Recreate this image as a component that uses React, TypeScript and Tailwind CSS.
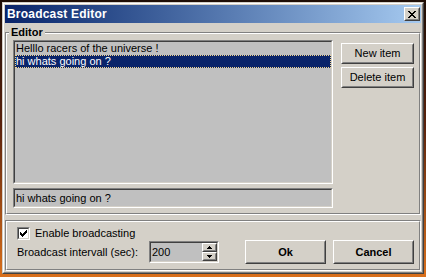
import React from "react";

type P = { className?: string; innerClassName?: string; children?: React.ReactNode };

const Raised = ({ className = "", innerClassName = "", children }: P) => (
  <div className={`border border-t-white border-l-white border-r-[#404040] border-b-[#404040] ${className}`}>
    <div
      className={`w-full h-full border border-t-[#d4d0c8] border-l-[#d4d0c8] border-r-[#808080] border-b-[#808080] bg-[#d4d0c8] flex items-center justify-center ${innerClassName}`}
    >
      {children}
    </div>
  </div>
);

const Sunken = ({ className = "", innerClassName = "", children }: P) => (
  <div className={`border border-t-[#808080] border-l-[#808080] border-r-white border-b-white ${className}`}>
    <div
      className={`w-full h-full border border-t-[#404040] border-l-[#404040] border-r-[#d4d0c8] border-b-[#d4d0c8] ${innerClassName}`}
    >
      {children}
    </div>
  </div>
);

const Etched = ({ className = "", innerClassName = "", children }: P) => (
  <div className={`border border-t-[#808080] border-l-[#808080] border-r-white border-b-white ${className}`}>
    <div
      className={`w-full h-full border border-t-white border-l-white border-r-[#808080] border-b-[#808080] ${innerClassName}`}
    >
      {children}
    </div>
  </div>
);

const Pixels = ({ rows, w, h }: { rows: string[]; w: number; h: number }) => (
  <svg width={w} height={h} viewBox={`0 0 ${w} ${h}`} shapeRendering="crispEdges">
    {rows.flatMap((r, y) =>
      r.split("").map((c, x) => (c === "X" ? <rect key={`${x}-${y}`} x={x} y={y} width={1} height={1} fill="#000" /> : null))
    )}
  </svg>
);

const closeGlyph = ["XX....XX", ".XX..XX.", "..XXXX..", "...XX...", "..XXXX..", ".XX..XX.", "XX....XX"];
const checkGlyph = ["......X", ".....XX", "X...XXX", "XX.XXX.", "XXXXX..", ".XXX...", "..X...."];
const upGlyph = ["..X..", ".XXX.", "XXXXX"];
const downGlyph = ["XXXXX", ".XXX.", "..X.."];

export default function App() {
  return (
    <div className="w-[426px] h-[277px] pt-[2px] pl-[2px] pr-[2px] pb-[3px] bg-[linear-gradient(180deg,#1e0e06_0%,#5a220c_45%,#d9701c_100%)] font-['Liberation_Sans',Arial,sans-serif] text-[11px] text-black">
      <div className="h-full border border-t-[#d4d0c8] border-l-[#d4d0c8] border-r-[#404040] border-b-[#404040]">
        <div className="h-full border border-t-white border-l-white border-r-[#808080] border-b-[#808080] bg-[#d4d0c8] p-[1px] flex flex-col">
          {/* Title bar */}
          <div className="h-[18px] shrink-0 flex items-center bg-linear-to-r from-[#0a246a] to-[#a6caf0] pl-[2px] pr-[1px]">
            <span className="text-white font-bold text-[12px] leading-none tracking-[0.2px]">Broadcast Editor</span>
            <Raised className="ml-auto w-[16px] h-[14px]">
              <Pixels rows={closeGlyph} w={8} h={7} />
            </Raised>
          </div>

          {/* Client area */}
          <div className="flex-1 flex flex-col pt-[9px]">
            {/* Editor group */}
            <Etched className="relative h-[183px]" innerClassName="flex pt-[6px] pl-[6px] pr-[5px] pb-[5px]">
              <span className="absolute left-[3px] top-[-7px] px-[2px] bg-[#d4d0c8] font-bold leading-[13px]">Editor</span>
              <div className="w-[320px] flex flex-col gap-[4px]">
                <Sunken className="h-[144px]" innerClassName="bg-[#c0c0c0]">
                  <div className="h-[13px] leading-[13px] pl-[1px] whitespace-nowrap">Helllo racers of the universe !</div>
                  <div className="h-[13px] leading-[13px] pl-[1px] whitespace-nowrap bg-[#0a246a] text-white outline-1 outline-dotted -outline-offset-1 outline-[#f3d58a]">
                    hi whats going on ?
                  </div>
                </Sunken>
                <Sunken className="h-[20px]" innerClassName="bg-[#c0c0c0] flex items-center pl-[1px]">
                  <span>hi whats going on ?</span>
                </Sunken>
              </div>
              <div className="ml-[8px] pt-[3px] flex flex-col gap-[3px]">
                <Raised className="w-[73px] h-[21px]">New item</Raised>
                <Raised className="w-[73px] h-[21px]">Delete item</Raised>
              </div>
            </Etched>

            {/* Bottom panel */}
            <Etched className="mt-[5px] h-[51px]" innerClassName="flex pl-[10px] pr-[5px] pb-[5px]">
              <div className="flex flex-col pt-[5px]">
                <div className="flex items-center h-[13px]">
                  <Sunken className="w-[13px] h-[13px]" innerClassName="bg-white flex items-center justify-center">
                    <Pixels rows={checkGlyph} w={7} h={7} />
                  </Sunken>
                  <span className="ml-[5px] leading-[13px]">Enable broadcasting</span>
                </div>
                <div className="flex items-center mt-[1px]">
                  <span className="w-[132px] whitespace-nowrap">Broadcast intervall (sec):</span>
                  <Sunken className="w-[70px] h-[22px]" innerClassName="bg-[#c0c0c0] flex items-stretch">
                    <span className="flex-1 flex items-center pl-[1px]">200</span>
                    <div className="w-[15px] flex flex-col">
                      <Raised className="flex-1">
                        <Pixels rows={upGlyph} w={5} h={3} />
                      </Raised>
                      <Raised className="flex-1">
                        <Pixels rows={downGlyph} w={5} h={3} />
                      </Raised>
                    </div>
                  </Sunken>
                </div>
              </div>
              <div className="ml-auto flex items-end gap-[7px]">
                <Raised className="w-[81px] h-[24px]" innerClassName="font-bold">Ok</Raised>
                <Raised className="w-[81px] h-[24px]" innerClassName="font-bold">Cancel</Raised>
              </div>
            </Etched>
          </div>
        </div>
      </div>
    </div>
  );
}
